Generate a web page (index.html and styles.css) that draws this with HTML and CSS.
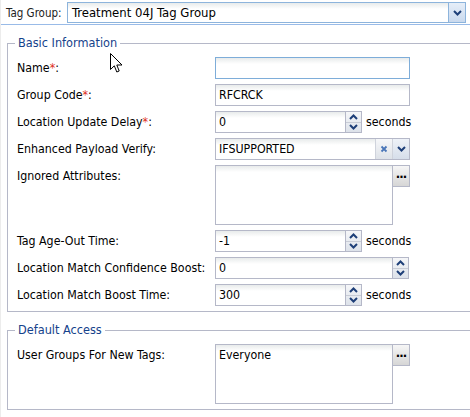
FILE: index.html
```html
<!DOCTYPE html>
<html>
<head>
<meta charset="utf-8">
<link rel="stylesheet" href="styles.css">
</head>
<body>
<div class="page">
  <div class="topbar">
    <span class="tg-label">Tag Group:</span>
    <div class="combo combo-main">
      <span class="combo-val">Treatment 04J Tag Group</span>
      <span class="trig trig-main"><svg width="9" height="6" viewBox="0 0 9 6"><path d="M1 1 L4.5 4.5 L8 1" fill="none" stroke="#1e3f78" stroke-width="2"/></svg></span>
    </div>
  </div>

  <fieldset class="fs fs-basic">
    <legend>Basic Information</legend>
    <div class="rows">
      <div class="row">
        <span class="lbl">Name<span class="req">*</span>:</span>
        <div class="inp inp-focus w-full"></div>
      </div>
      <div class="row">
        <span class="lbl">Group Code<span class="req">*</span>:</span>
        <div class="inp w-full"><span class="val">RFCRCK</span></div>
      </div>
      <div class="row">
        <span class="lbl">Location Update Delay<span class="req">*</span>:</span>
        <div class="inp w-spin"><span class="val">0</span></div>
        <div class="spin">
          <span class="spin-btn"><svg width="9" height="6" viewBox="0 0 9 6"><path d="M1 5 L4.5 1.5 L8 5" fill="none" stroke="#1e3f78" stroke-width="2"/></svg></span>
          <span class="spin-btn"><svg width="9" height="6" viewBox="0 0 9 6"><path d="M1 1 L4.5 4.5 L8 1" fill="none" stroke="#1e3f78" stroke-width="2"/></svg></span>
        </div>
        <span class="unit">seconds</span>
      </div>
      <div class="row">
        <span class="lbl">Enhanced Payload Verify:</span>
        <div class="combo combo-enh">
          <span class="val">IFSUPPORTED</span>
          <span class="trig trig-clear"><svg width="8" height="8" viewBox="0 0 8 8"><path d="M1.5 1.5 L6.5 6.5 M6.5 1.5 L1.5 6.5" stroke="#4a76b8" stroke-width="1.8"/></svg></span>
          <span class="trig trig-drop"><svg width="9" height="6" viewBox="0 0 9 6"><path d="M1 1 L4.5 4.5 L8 1" fill="none" stroke="#1e3f78" stroke-width="2"/></svg></span>
        </div>
      </div>
      <div class="row row-tall">
        <span class="lbl lbl-top">Ignored Attributes:</span>
        <div class="area"></div>
        <span class="dots">&middot;&middot;&middot;</span>
      </div>
      <div class="row">
        <span class="lbl">Tag Age-Out Time:</span>
        <div class="inp w-spin"><span class="val">-1</span></div>
        <div class="spin">
          <span class="spin-btn"><svg width="9" height="6" viewBox="0 0 9 6"><path d="M1 5 L4.5 1.5 L8 5" fill="none" stroke="#1e3f78" stroke-width="2"/></svg></span>
          <span class="spin-btn"><svg width="9" height="6" viewBox="0 0 9 6"><path d="M1 1 L4.5 4.5 L8 1" fill="none" stroke="#1e3f78" stroke-width="2"/></svg></span>
        </div>
        <span class="unit">seconds</span>
      </div>
      <div class="row">
        <span class="lbl">Location Match Confidence Boost:</span>
        <div class="inp w-spin-wide"><span class="val">0</span></div>
        <div class="spin">
          <span class="spin-btn"><svg width="9" height="6" viewBox="0 0 9 6"><path d="M1 5 L4.5 1.5 L8 5" fill="none" stroke="#1e3f78" stroke-width="2"/></svg></span>
          <span class="spin-btn"><svg width="9" height="6" viewBox="0 0 9 6"><path d="M1 1 L4.5 4.5 L8 1" fill="none" stroke="#1e3f78" stroke-width="2"/></svg></span>
        </div>
      </div>
      <div class="row">
        <span class="lbl">Location Match Boost Time:</span>
        <div class="inp w-spin"><span class="val">300</span></div>
        <div class="spin">
          <span class="spin-btn"><svg width="9" height="6" viewBox="0 0 9 6"><path d="M1 5 L4.5 1.5 L8 5" fill="none" stroke="#1e3f78" stroke-width="2"/></svg></span>
          <span class="spin-btn"><svg width="9" height="6" viewBox="0 0 9 6"><path d="M1 1 L4.5 4.5 L8 1" fill="none" stroke="#1e3f78" stroke-width="2"/></svg></span>
        </div>
        <span class="unit">seconds</span>
      </div>
    </div>
  </fieldset>

  <fieldset class="fs fs-access">
    <legend>Default Access</legend>
    <div class="rows">
      <div class="row row-tall">
        <span class="lbl lbl-top">User Groups For New Tags:</span>
        <div class="area"><span class="val val-top">Everyone</span></div>
        <span class="dots">&middot;&middot;&middot;</span>
      </div>
    </div>
  </fieldset>

  <svg class="cursor" width="13" height="21" viewBox="0 0 13 21"><path d="M0.5 0.5 L0.5 16.5 L4.3 12.8 L6.8 19 L9.2 18 L6.8 12 L12 12 Z" fill="#fff" stroke="#000" stroke-width="1" stroke-linejoin="miter"/></svg>
</div>
</body>
</html>
```

FILE: styles.css
```css
html, body {
  margin: 0;
  padding: 0;
  background: #fff;
  overflow: hidden;
}

.page {
  position: relative;
  width: 470px;
  height: 417px;
  overflow: hidden;
  font-family: "DejaVu Sans Condensed", "DejaVu Sans", sans-serif;
  font-size: 12.3px;
  color: #000;
  border-left: 1px solid #ececec;
  box-sizing: border-box;
}

.topbar {
  display: flex;
  align-items: center;
  height: 22px;
  padding: 2px 0 0 5px;
  border-bottom: 1px solid #99bbe8;
}

.tg-label {
  width: 61px;
  font-size: 11.5px;
  color: #222;
}

.combo {
  display: flex;
  align-items: stretch;
  box-sizing: border-box;
  height: 21px;
  background: linear-gradient(to bottom, #e8ebeb 0, #fff 6px);
}

.combo-main {
  width: 399px;
  align-self: flex-start;
  border: 1px solid #8db4dc;
}

.combo-val {
  flex: 1;
  padding-left: 4px;
  font-size: 13px;
  line-height: 19px;
}

.trig {
  display: flex;
  align-items: center;
  justify-content: center;
}

.trig-main {
  width: 16px;
  border-left: 1px solid #8db4dc;
  background: linear-gradient(to bottom, #e6eef8 0, #c9d9ee 100%);
}

.fs {
  margin: 11px -20px 0 6px;
  padding: 7px 0 5px 9px;
  border: 1px solid #b5b8c8;
  min-width: 0;
}

.fs legend {
  padding: 0 3px;
  margin-left: -2px;
  line-height: 14px;
  font-size: 12.6px;
  color: #15428b;
}

.rows {
  display: flex;
  flex-direction: column;
  gap: 5px;
}

.row {
  display: flex;
  align-items: center;
  height: 22px;
}

.row-tall {
  height: 60px;
  align-items: flex-start;
}

.lbl {
  width: 198px;
  flex-shrink: 0;
  white-space: nowrap;
}

.lbl-top {
  line-height: 22px;
}

.req {
  color: #e03020;
}

.inp {
  box-sizing: border-box;
  height: 22px;
  border: 1px solid #b5b8c8;
  background: linear-gradient(to bottom, #e8ebeb 0, #fff 6px);
  display: flex;
  align-items: center;
}

.inp-focus {
  border-color: #7eadd9;
}

.w-full { width: 195px; }
.w-spin { width: 131px; }
.w-spin-wide { width: 178px; }

.val {
  padding-left: 3px;
  white-space: nowrap;
}

.val-top {
  display: block;
  line-height: 20px;
}

.spin {
  box-sizing: border-box;
  width: 16px;
  height: 22px;
  display: flex;
  flex-direction: column;
  border: 1px solid #b5b8c8;
  border-left: none;
  background: linear-gradient(to bottom, #f5f6f8 0, #dde2ea 100%);
}

.spin-btn {
  flex: 1;
  display: flex;
  align-items: center;
  justify-content: center;
}

.spin-btn + .spin-btn {
  border-top: 1px solid #c8ccd6;
}

.unit {
  margin-left: 4px;
}

.combo-enh {
  width: 195px;
  height: 22px;
  border: 1px solid #b5b8c8;
}

.combo-enh .val {
  flex: 1;
  line-height: 20px;
}

.trig-clear {
  width: 16px;
  border-left: 1px solid #cfd3dc;
  background: linear-gradient(to bottom, #f6f7f9 0, #dee2e8 100%);
}

.trig-drop {
  width: 16px;
  border-left: 1px solid #cfd3dc;
  background: linear-gradient(to bottom, #eef2f8 0, #d6deea 100%);
}

.area {
  box-sizing: border-box;
  width: 178px;
  height: 60px;
  border: 1px solid #b5b8c8;
  background: linear-gradient(to bottom, #e8ebeb 0, #fff 6px);
}

.dots {
  box-sizing: border-box;
  width: 17px;
  height: 22px;
  border: 1px solid #b5b8c8;
  border-left: none;
  background: linear-gradient(to bottom, #f6f6f6 0, #d6d6d6 100%);
  font-weight: bold;
  font-size: 13px;
  line-height: 22px;
  text-align: center;
  letter-spacing: -1px;
}

.cursor {
  position: absolute;
  left: 109px;
  top: 53px;
}
```
